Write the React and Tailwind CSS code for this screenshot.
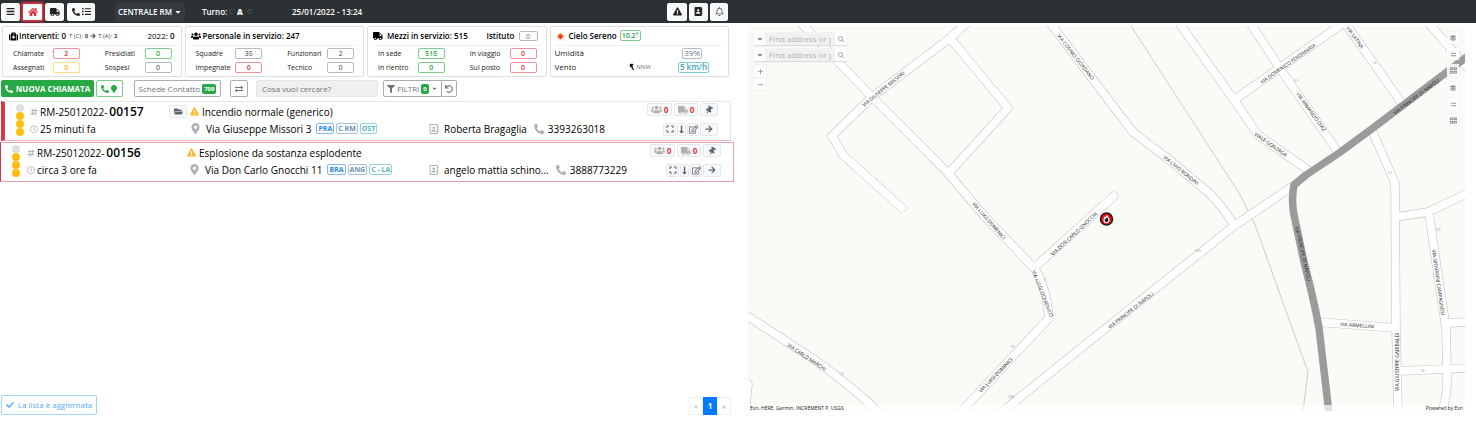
import React from 'react';
import {
  FaBars, FaHome, FaTruck, FaPhoneAlt, FaListUl, FaExclamationTriangle, FaRegBell, FaMedkit,
  FaUsers, FaFilter, FaUndo, FaMapMarker, FaMapMarkerAlt, FaExchangeAlt, FaHashtag, FaRegClock,
  FaFolderOpen, FaRegAddressBook, FaThumbtack, FaExpand, FaLongArrowAltDown, FaRegEdit,
  FaArrowRight, FaCheck, FaCaretDown, FaLayerGroup, FaSearch, FaAddressBook,
} from 'react-icons/fa';

const tones = {
  red: 'border-[#f0929b] text-[#dc3545]',
  green: 'border-[#7ccb8d] text-[#28a745]',
  yellow: 'border-[#ffdf80] text-[#fdb913]',
  gray: 'border-[#b5babf] text-[#6c757d]',
  cyan: 'border-[#7fcbd8] text-[#3aa5b9]',
  blue: 'border-[#80b9f5] text-[#2a86ee]',
  slate: 'border-[#a9c0da] text-[#6d8fb8]',
  teal: 'border-[#90d3dd] text-[#55b5c4]',
};

function Stat({ label, value, tone }) {
  return (
    <div className="flex h-[14px] items-center justify-between">
      <span>{label}</span>
      <span className={`flex h-[11px] w-[27px] items-center justify-center rounded-xs border font-semibold ${tones[tone]}`}>{value}</span>
    </div>
  );
}

function Card({ header, stats, children }) {
  return (
    <section className="h-[51px] rounded-xs border border-[#dfdfdf] shadow-[0_0_1px_#ddd]">
      <h2 className="mx-[5px] flex h-[19px] items-center border-b border-[#f1f1f1] text-[8px] font-semibold whitespace-nowrap text-black">{header}</h2>
      {stats && (
        <div className="grid grid-cols-2 gap-x-[25px] pr-[9px] pl-[10px] text-[7px] text-[#222]">
          {stats.map((s) => <Stat key={s[0]} label={s[0]} value={s[1]} tone={s[2]} />)}
        </div>
      )}
      {children}
    </section>
  );
}

function TopButton({ label, className, children }) {
  return (
    <button type="button" aria-label={label} className={`flex h-[18px] items-center justify-center gap-[2px] rounded-xs border bg-[#f8f9fa] text-[9px] ${className}`}>
      {children}
    </button>
  );
}

function SmallButton({ label, className, children }) {
  return (
    <button type="button" aria-label={label} className={`flex h-[13px] items-center justify-center gap-[2px] rounded-xs border border-[#e6e8ea] bg-[#f8f9fa] text-[#5d656c] ${className}`}>
      {children}
    </button>
  );
}

function Incident({ item, frame, idCell, mainCell, pinPad, actionsPad }) {
  return (
    <article className={`flex h-[40px] items-center pb-[2px] text-[10px] leading-none whitespace-nowrap text-black ${frame}`}>
      <div className="flex w-[8px] shrink-0 flex-col">
        <i className="size-[8px] rounded-full bg-[#e0e0e0]" />
        <i className="size-[8px] rounded-full bg-[#fdbf0f]" />
        <i className="size-[8px] rounded-full bg-[#fdbf0f]" />
        <i className="size-[8px] rounded-full bg-[#fdbf0f]" />
      </div>
      <div className={`shrink-0 ${idCell}`}>
        <div className="flex h-[17px] items-center gap-[2px]">
          <FaHashtag className="size-[8px] text-[#b5b5b5]" />
          <span>RM-25012022-</span>
          <b className="text-[12px] font-semibold">{item.number}</b>
        </div>
        <div className="flex h-[17px] items-center gap-[2px]">
          <FaRegClock className="size-[8px] text-[#b5b5b5]" />
          <span>{item.age}</span>
        </div>
      </div>
      <div className={`shrink-0 ${mainCell}`}>
        <div className="flex h-[17px] items-center gap-[3px]">
          {item.folder && (
            <SmallButton label="Apri cartella" className="w-[18px]"><FaFolderOpen className="size-[9px]" /></SmallButton>
          )}
          <FaExclamationTriangle className="size-[9px] text-[#fdb927]" />
          <span>{item.title}</span>
        </div>
        <div className={`flex h-[17px] items-center ${pinPad}`}>
          <FaMapMarkerAlt className="mr-[5px] size-[11px] text-[#b0b0b0]" />
          <span>{item.address}</span>
          <span className="ml-[5px] flex gap-[2px] text-[7px] font-bold">
            {item.tags.map(([t, tone]) => (
              <span key={t} className={`flex h-[11px] items-center rounded-xs border px-px ${tones[tone]}`}>{t}</span>
            ))}
          </span>
        </div>
      </div>
      <div className="flex h-[34px] flex-1 items-end">
        <div className="flex h-[17px] items-center">
          <FaRegAddressBook className="mr-[5px] size-[10px] text-[#b0b0b0]" />
          <span>{item.person}</span>
          <FaPhoneAlt className="mr-[4px] ml-[7px] size-[10px] text-[#b0b0b0]" />
          <a href={`tel:${item.phone}`}>{item.phone}</a>
        </div>
      </div>
      <div className={`text-[8px] ${actionsPad}`}>
        <div className="flex h-[18px] items-start justify-end gap-[2px]">
          <SmallButton label="Squadre" className="w-[25px]"><FaUsers className="size-[11px] text-[#b0b0b0]" /><b className="text-[#dc3545]">0</b></SmallButton>
          <SmallButton label="Mezzi" className="w-[24px]"><FaTruck className="size-[10px] text-[#b0b0b0]" /><b className="text-[#dc3545]">0</b></SmallButton>
          <SmallButton label="Fissa" className="w-[18px]"><FaThumbtack className="size-[8px] rotate-[30deg]" /></SmallButton>
        </div>
        <div className="flex h-[16px] items-center justify-end gap-px">
          <SmallButton label="Espandi" className="w-[13px]"><FaExpand className="size-[8px]" /></SmallButton>
          <SmallButton label="Sposta giù" className="w-[9px]"><FaLongArrowAltDown className="size-[9px]" /></SmallButton>
          <SmallButton label="Modifica" className="w-[12px]"><FaRegEdit className="size-[9px]" /></SmallButton>
          <SmallButton label="Vai" className="w-[18px]"><FaArrowRight className="size-[8px]" /></SmallButton>
        </div>
      </div>
    </article>
  );
}

const roads = [
  'M800 22L872 97L948 173L985 217L1034 268Q1046 284 1049 318L958 415',
  'M970 20L950 38L872 97L832 136L843 155L902 208',
  'M950 38L1008 108L949 173',
  'M1048 20L1110 102Q1122 118 1133 132Q1148 144 1166 157L1209 193Q1224 208 1234 225',
  'M1114 196L1034 268',
  'M1293 186L1234 226L1106 328L998 415',
  'M744 314L815 360Q850 385 882 415',
  'M1177 20L1234 100L1258 135L1308 170',
  'M1345 22L1234 100',
  'M1247 18L1281 70L1338 152',
  'M1343 20L1401 102',
  'M1426 20L1470 71',
  'M1373 133L1395 183L1396 328L1398 415',
  'M1396 217L1428 212L1470 192',
  'M1429 213L1439 282L1446 328L1447 372Q1448 395 1441 415',
  'M1318 322L1396 328',
  'M1446 323L1470 322',
  'M1398 371L1470 368',
  'M742 382L748 384L746 405',
];

const grayRoad = 'M1468 56L1373 128L1339 153L1306 175L1294 185Q1291 200 1294 215L1304 262Q1314 300 1319 328L1329 413';

const streets = [
  ['VIA GIUSEPPE MISSORI', 864, 107, -39],
  ['VIA COSIMO GIORDANO', 1057, 36, 52],
  ['VIA LUIGI DOMENICI', 972, 204, 49],
  ['VIA DON CARLO GNOCCHI', 1053, 256, -43],
  ['VIA LUIGI DOMENICO', 1032, 271, 69],
  ['VIA LUIGI DOMINICI', 981, 393, -46],
  ['VIA CARLO MARCHI', 787, 346, 34],
  ['VIA PRINCIPE DI NAPOLI', 1110, 329, -38],
  ['VIA PRINCIPE DI NAPOLI', 1395, 115, -37],
  ['VIA PRINCIPE DI NAPOLI', 1295, 227, 77],
  ['VIA LIVIO BONDINI', 1163, 158, 39],
  ['VIA DOMENICO FERDIMARIA', 1262, 84, -35],
  ['VIA ARMANDO DIAZ', 1296, 94, 54],
  ['VIALE GONZAGA', 1254, 135, 35],
  ['VIA LATINA', 1346, 28, 54],
  ['VIA ARMELLINI', 1340, 326, 4],
  ['VIA GIUSEPPE GARIBALDI', 1399, 391, -90],
  ['VIA GIOVANNI CAMPAGNOLI', 1432, 250, 82],
];

function MapDrawing() {
  return (
    <svg viewBox="748 26 717 385" preserveAspectRatio="xMidYMid slice" className="block h-full w-full" role="img" aria-label="Mappa">
      <rect x="0" y="0" width="2400" height="900" fill="#fafaf6" />
      <path d="M1131 26L1239 193L1254 222L1308 372L1303 411" fill="none" stroke="#c4c2ba" strokeWidth="0.8" />
      <g fill="none" strokeLinecap="round" strokeLinejoin="round">
        <g stroke="#c6c6c4" strokeWidth="9">{roads.map((d) => <path key={d} d={d} />)}</g>
        <g stroke="#ffffff" strokeWidth="7.8">{roads.map((d) => <path key={d} d={d} />)}</g>
        <path d={grayRoad} stroke="#9b9b9b" strokeWidth="7.5" strokeLinejoin="round" />
      </g>
      <g fontFamily="'Open Sans','Noto Sans',sans-serif" fontSize="5" fill="#222">
        {streets.map(([name, x, y, angle]) => (
          <text key={name + x} transform={`translate(${x} ${y}) rotate(${angle})`}>{name}</text>
        ))}
      </g>
      <g fontFamily="'Open Sans','Noto Sans',sans-serif" fontSize="4" fill="#999">
        <text x="839" y="375">12</text>
        <text x="1010" y="348">19</text>
        <text x="1007" y="398">138</text>
        <text x="1194" y="252">140</text>
        <text x="1044" y="281">5</text>
        <text x="1294" y="82">11</text>
        <text x="1372" y="64">14</text>
        <text x="1388" y="174">31</text>
        <text x="1436" y="231">23</text>
        <text x="1420" y="372">18</text>
      </g>
      <circle cx="1106.5" cy="219" r="6" fill="#f00a14" stroke="#1a1a1a" strokeWidth="1.5" />
      <path d="M1106.6 215.4C1107 217 1109.2 217.8 1109 220.2C1108.8 221.8 1107.8 222.6 1106.5 222.6C1105 222.6 1104 221.6 1104 220C1104 218.6 1104.4 217.8 1105 217.2L1105.6 218.2C1106.2 217.4 1106.6 216.6 1106.6 215.4Z" fill="#1a1a1a" stroke="#fff" strokeWidth="1.2" />
    </svg>
  );
}

function MapSearch() {
  return (
    <div className="flex h-[13px] items-center bg-white shadow-[0_1px_1px_#ddd]">
      <button type="button" aria-label="Origine ricerca" className="flex w-[11px] justify-center text-[8px] text-[#888]"><FaCaretDown /></button>
      <input aria-label="Cerca indirizzo" placeholder="Find address or place" className="h-full w-[70px] bg-[#f1f1ef] px-[4px] text-[8px] text-[#999] outline-none placeholder:text-[#b3b3b3]" />
      <button type="button" aria-label="Cerca" className="flex w-[12px] justify-center text-[#aaa]"><FaSearch className="size-[6px]" /></button>
    </div>
  );
}

function GridIcon() {
  return (
    <svg viewBox="0 0 8 8" className="size-[7px]" fill="none" stroke="#888">
      <rect x="0.5" y="1" width="3" height="2" /><rect x="4.8" y="1" width="3" height="2" />
      <rect x="0.5" y="5" width="3" height="2" /><rect x="4.8" y="5" width="3" height="2" />
    </svg>
  );
}

function ListIcon() {
  return <svg viewBox="0 0 8 8" className="size-[7px]" stroke="#777" strokeWidth="0.9"><path d="M1.2 2.6h5.6M1.2 5.4h5.6" /></svg>;
}

const mapTool = 'flex size-[12px] items-center justify-center bg-white/85 text-[#999] shadow-[0_0_1px_#ccc]';

export default function App() {
  return (
    <div className="flex min-h-screen flex-col bg-white font-['Open_Sans','Noto_Sans',sans-serif] text-[8px] leading-none">
      <header className="bg-[#2c3134]">
        <div className="flex h-[23px] w-1/2 items-center pr-[10px] pl-[1px] text-[9px] font-semibold whitespace-nowrap text-white">
          <nav className="flex gap-[2px]">
            <TopButton label="Menu" className="w-[19px] border-white text-[#222]"><FaBars /></TopButton>
            <TopButton label="Home" className="w-[21px] border-[#dc3545] text-[#dc3545] shadow-[0_0_3px_1px_#dc3545]"><FaHome className="size-[10px]" /></TopButton>
            <TopButton label="Mezzi" className="w-[19px] border-white text-[#222]"><FaTruck className="size-[10px]" /></TopButton>
            <TopButton label="Chiamate" className="ml-px w-[28px] border-white text-[#222]"><FaPhoneAlt className="size-[8px]" /><FaListUl /></TopButton>
          </nav>
          <button type="button" className="ml-[20px] flex h-[18px] w-[70px] items-center justify-center gap-[2px] rounded-xs bg-[#343a40] text-[8px]">
            CENTRALE RM <FaCaretDown className="size-[8px]" />
          </button>
          <div className="ml-[17px] flex w-[90px] items-center text-[8px]">
            <span className="w-[27px]">Turno:</span>
            <span className="w-[8px] text-[7px] font-normal text-[#5b6063]">C</span>
            <b className="w-[10px]">A</b>
            <span className="text-[7px] font-normal text-[#5b6063]">D</span>
          </div>
          <time className="text-[8px]">25/01/2022 - 13:24</time>
          <div className="ml-auto flex gap-[2px]">
            <TopButton label="Avvisi" className="w-[20px] border-white text-[#222]"><FaExclamationTriangle /></TopButton>
            <TopButton label="Rubrica" className="w-[19px] border-white text-[#222]"><FaAddressBook /></TopButton>
            <TopButton label="Notifiche" className="w-[18px] border-white text-[#555]"><FaRegBell /></TopButton>
          </div>
        </div>
      </header>

      <main className="grid flex-1 grid-cols-2">
        <div className="flex flex-col">
          <div className="grid grid-cols-4 gap-[3px] pt-[3px] pr-[9px] pl-[2px]">
            <Card
              header={<>
                <FaMedkit className="mr-px ml-px size-[9px]" />Interventi: 0
                <span className="ml-[3px] flex items-center gap-[2px] text-[6px] font-normal text-[#444]">T (C): <b>0</b><FaArrowRight />T (A): <b>2</b></span>
                <span className="ml-auto pr-px"><span className="font-normal">2022:</span> 0</span>
              </>}
              stats={[['Chiamate', 2, 'red'], ['Presidiati', 0, 'green'], ['Assegnati', 0, 'yellow'], ['Sospesi', 0, 'gray']]}
            />
            <Card
              header={<><FaUsers className="mr-[2px] size-[10px]" />Personale in servizio: 247</>}
              stats={[['Squadre', 35, 'gray'], ['Funzionari', 2, 'gray'], ['Impegnate', 0, 'red'], ['Tecnico', 0, 'gray']]}
            />
            <Card
              header={<>
                <FaTruck className="mr-[4px] size-[10px]" />Mezzi in servizio: 515
                <span className="ml-auto">Istituto</span>
                <span className={`mr-[3px] ml-[4px] flex h-[10px] w-[19px] items-center justify-center rounded-xs border text-[7px] font-normal ${tones.gray}`}>0</span>
              </>}
              stats={[['In sede', 515, 'green'], ['In viaggio', 0, 'red'], ['In rientro', 0, 'green'], ['Sul posto', 0, 'red']]}
            />
            <Card
              header={<>
                <svg viewBox="0 0 10 10" className="mr-[4px] size-[9px]"><path d="M5 0L6 2.5L8.5 1.5L7.5 4L10 5L7.5 6L8.5 8.5L6 7.5L5 10L4 7.5L1.5 8.5L2.5 6L0 5L2.5 4L1.5 1.5L4 2.5Z" fill="#ffb27f" /><circle cx="5" cy="5" r="2.4" fill="#f0350f" /></svg>
                Cielo Sereno
                <span className={`-mt-[2px] ml-[3px] flex h-[11px] items-center rounded-xs border px-px text-[7px] ${tones.green}`}>10.2°</span>
              </>}
            >
              <div className="pr-[19px] pl-[4px] text-[8px] text-[#222]">
                <div className="flex h-[14px] items-center justify-between">
                  Umidità
                  <span className={`mr-[7px] flex h-[11px] items-center rounded-xs border px-px ${tones.gray}`}>39%</span>
                </div>
                <div className="flex h-[14px] items-center">
                  Vento
                  <svg viewBox="0 0 6 8" className="ml-auto h-[8px] w-[6px]"><path d="M1.2 1L4.4 1.2L3.4 2.4Q3.2 5 5 7.2Q2.4 6 2.2 3.2L1 4Z" fill="#000" stroke="#000" strokeWidth="0.4" /></svg>
                  <span className="ml-px text-[6px] text-[#777]">NNW</span>
                  <span className={`ml-[27px] flex h-[11px] items-center rounded-xs border px-px font-semibold ${tones.cyan}`}>5 km/h</span>
                </div>
              </div>
            </Card>
          </div>

          <div className="mt-[3px] flex h-[17px] items-stretch pl-px text-[8px] whitespace-nowrap text-[#6c757d]">
            <button type="button" className="flex w-[93px] items-center justify-center gap-[3px] rounded-xs bg-[#28a745] font-bold text-white"><FaPhoneAlt className="shrink-0" />NUOVA CHIAMATA</button>
            <button type="button" aria-label="Chiamata con posizione" className="ml-[2px] flex w-[27px] items-center justify-center gap-px rounded-xs border border-[#7ccb8d] text-[#28a745]"><FaPhoneAlt /><FaMapMarker /></button>
            <button type="button" className="ml-[11px] flex w-[87px] items-center justify-center gap-[2px] rounded-xs border border-[#a9aeb3]">Schede Contatto <b className="rounded-xs bg-[#28a745] px-[2px] py-[2px] text-[6px] text-white">709</b></button>
            <button type="button" aria-label="Scambia" className="ml-[9px] flex w-[18px] items-center justify-center rounded-xs border border-[#a9aeb3]"><FaExchangeAlt /></button>
            <input aria-label="Cerca" placeholder="Cosa vuoi cercare?" className="ml-[8px] w-[122px] rounded-xs border border-[#e6e6e6] bg-[#efefef] px-[5px] text-[8px] outline-none placeholder:text-[#6c757d]" />
            <button type="button" className="ml-[5px] flex w-[59px] items-center justify-center gap-[2px] rounded-l-xs border border-[#a9aeb3]"><FaFilter />FILTRI <b className="rounded-xs bg-[#28a745] px-[2px] py-[2px] text-[6px] text-white">0</b><FaCaretDown className="size-[7px]" /></button>
            <button type="button" aria-label="Azzera" className="flex w-[15px] items-center justify-center rounded-r-xs border border-l-0 border-[#a9aeb3]"><FaUndo /></button>
          </div>

          <div className="mt-[4px]">
            <Incident
              frame="ml-px mr-[7px] border border-l-4 border-[#e6e6e6] border-b-[#efb4ba] border-l-[#dc3545] pl-[11px]"
              idCell="ml-[6px] w-[139px]"
              mainCell="w-[260px]"
              pinPad="pl-[21px]"
              actionsPad="pr-[12px]"
              item={{ number: '00157', age: '25 minuti fa', folder: true, title: 'Incendio normale (generico)', address: 'Via Giuseppe Missori 3', tags: [['PRA', 'blue'], ['C RM', 'slate'], ['OST', 'teal']], person: 'Roberta Bragaglia', phone: '3393263018' }}
            />
            <Incident
              frame="mt-px mr-[4px] border border-[#e6a2a9] border-l-[#dc3545] pl-[11px]"
              idCell="ml-[7px] w-[160px]"
              mainCell="w-[242px]"
              pinPad="pl-[2px]"
              actionsPad="pr-[12px]"
              item={{ number: '00156', age: 'circa 3 ore fa', folder: false, title: 'Esplosione da sostanza esplodente', address: 'Via Don Carlo Gnocchi 11', tags: [['BRA', 'blue'], ['ANG', 'slate'], ['C - LA', 'teal']], person: 'angelo mattia schino...', phone: '3888773229' }}
            />
          </div>

          <footer className="mt-auto flex items-end justify-between pr-[7px] pb-[7px] pl-px">
            <button type="button" className="flex h-[20px] w-[96px] items-center justify-center gap-[4px] rounded-xs border border-[#a6d0ff] text-[8px] text-[#5aa9fb]"><FaCheck />La lista è aggiornata</button>
            <nav aria-label="Pagine" className="flex h-[18px] text-[8px]">
              <a href="#prec" className="flex w-[14px] items-center justify-center border border-[#f0f0f0] text-[#9aa5b5]">«</a>
              <a href="#1" aria-current="page" className="flex w-[14px] items-center justify-center bg-[#007bff] font-bold text-white">1</a>
              <a href="#succ" className="flex w-[14px] items-center justify-center border border-[#f0f0f0] text-[#7aa5dd]">»</a>
            </nav>
          </footer>
        </div>

        <div className="pt-[3px] pr-[11px] pl-[10px]">
          <div className="relative h-[385px] overflow-hidden">
            <MapDrawing />
            <div className="absolute top-[6px] left-[6px] flex flex-col items-start gap-[3px]">
              <MapSearch />
              <MapSearch />
              <div className="mt-px flex flex-col gap-px text-[#999]">
                <button type="button" aria-label="Ingrandisci" className={mapTool}><svg viewBox="0 0 8 8" className="size-[7px]" stroke="currentColor"><path d="M1 4h6M4 1v6" /></svg></button>
                <button type="button" aria-label="Riduci" className={mapTool}><svg viewBox="0 0 8 8" className="size-[7px]" stroke="currentColor"><path d="M1 4h6" /></svg></button>
              </div>
            </div>
            <div className="absolute top-[6px] right-[6px] flex flex-col gap-[6px]">
              {[1, 2].map((n) => (
                <div key={n} className="flex flex-col gap-[4px]">
                  <button type="button" aria-label="Livelli" className={mapTool}><FaLayerGroup className="size-[6px]" /></button>
                  <button type="button" aria-label="Legenda" className={mapTool}><ListIcon /></button>
                  <button type="button" aria-label="Mappe di base" className={mapTool}><GridIcon /></button>
                </div>
              ))}
            </div>
            <div className="absolute inset-x-0 bottom-0 flex h-[6px] items-center justify-between bg-white/70 px-[2px] text-[5px] text-[#222]">
              <span>Esri, HERE, Garmin, INCREMENT P, USGS</span>
              <span>Powered by Esri</span>
            </div>
          </div>
        </div>
      </main>
    </div>
  );
}
